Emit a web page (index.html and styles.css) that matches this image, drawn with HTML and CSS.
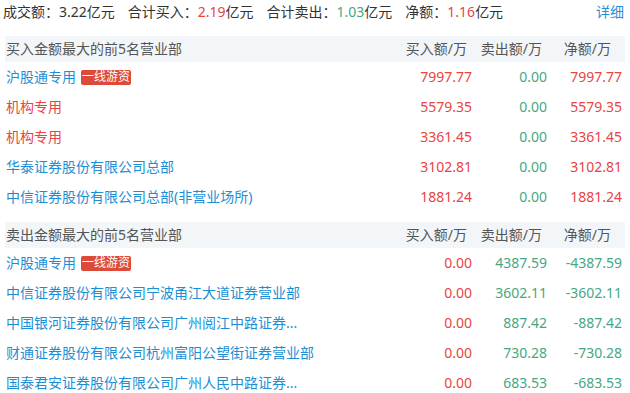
FILE: index.html
```html
<!DOCTYPE html>
<html lang="zh-CN">
<head>
<meta charset="utf-8">
<link rel="stylesheet" href="styles.css">
</head>
<body>
<div class="summary">
  <span class="item">成交额：<span class="num">3.22</span>亿元</span>
  <span class="item">合计买入：<span class="num up">2.19</span>亿元</span>
  <span class="item">合计卖出：<span class="num down">1.03</span>亿元</span>
  <span class="item">净额：<span class="num up">1.16</span>亿元</span>
  <a class="detail">详细</a>
</div>

<div class="table">
  <div class="row head">
    <div class="name">买入金额最大的前5名营业部</div>
    <div class="c1">买入额/万</div>
    <div class="c2">卖出额/万</div>
    <div class="c3">净额/万</div>
  </div>
  <div class="row">
    <div class="name link">沪股通专用<span class="tag">一线游资</span></div>
    <div class="c1 up">7997.77</div><div class="c2 down">0.00</div><div class="c3 up">7997.77</div>
  </div>
  <div class="row">
    <div class="name inst">机构专用</div>
    <div class="c1 up">5579.35</div><div class="c2 down">0.00</div><div class="c3 up">5579.35</div>
  </div>
  <div class="row">
    <div class="name inst">机构专用</div>
    <div class="c1 up">3361.45</div><div class="c2 down">0.00</div><div class="c3 up">3361.45</div>
  </div>
  <div class="row">
    <div class="name link">华泰证券股份有限公司总部</div>
    <div class="c1 up">3102.81</div><div class="c2 down">0.00</div><div class="c3 up">3102.81</div>
  </div>
  <div class="row">
    <div class="name link">中信证券股份有限公司总部(非营业场所)</div>
    <div class="c1 up">1881.24</div><div class="c2 down">0.00</div><div class="c3 up">1881.24</div>
  </div>
</div>

<div class="table second">
  <div class="row head">
    <div class="name">卖出金额最大的前5名营业部</div>
    <div class="c1">买入额/万</div>
    <div class="c2">卖出额/万</div>
    <div class="c3">净额/万</div>
  </div>
  <div class="row">
    <div class="name link">沪股通专用<span class="tag">一线游资</span></div>
    <div class="c1 up">0.00</div><div class="c2 down">4387.59</div><div class="c3 down">-4387.59</div>
  </div>
  <div class="row">
    <div class="name link">中信证券股份有限公司宁波甬江大道证券营业部</div>
    <div class="c1 up">0.00</div><div class="c2 down">3602.11</div><div class="c3 down">-3602.11</div>
  </div>
  <div class="row">
    <div class="name link">中国银河证券股份有限公司广州阅江中路证券...</div>
    <div class="c1 up">0.00</div><div class="c2 down">887.42</div><div class="c3 down">-887.42</div>
  </div>
  <div class="row">
    <div class="name link">财通证券股份有限公司杭州富阳公望街证券营业部</div>
    <div class="c1 up">0.00</div><div class="c2 down">730.28</div><div class="c3 down">-730.28</div>
  </div>
  <div class="row">
    <div class="name link">国泰君安证券股份有限公司广州人民中路证券...</div>
    <div class="c1 up">0.00</div><div class="c2 down">683.53</div><div class="c3 down">-683.53</div>
  </div>
</div>
</body>
</html>
```

FILE: styles.css
```css
* { box-sizing: border-box; }
html, body {
  margin: 0;
  padding: 0;
  background: #ffffff;
  font-family: "Noto Sans", "Noto Sans CJK SC", sans-serif;
  font-size: 14px;
  color: #333333;
  overflow: hidden;
}
.summary {
  display: flex;
  align-items: center;
  height: 24px;
  padding: 0 6px 0 3px;
  line-height: 24px;
  margin-bottom: 12px;
}
.summary .item { margin-right: 13px; white-space: nowrap; }
.summary .detail {
  margin-left: auto;
  color: #2b8fd6;
  cursor: pointer;
}
.up { color: #e8453f; }
.down { color: #46a883; }
.table {
  margin: 0 5px;
}
.table.second { margin-top: 10px; }
.row {
  display: grid;
  grid-template-columns: 1fr 75px 75px 78px;
  height: 30px;
  align-items: center;
  line-height: 20px;
}
.row > div { text-align: right; white-space: nowrap; }
.row > .name {
  text-align: left;
  padding-left: 1px;
  display: flex;
  align-items: center;
  overflow: hidden;
}
.row > .c3 { padding-right: 3px; }
.row.head {
  height: 26px;
  background: #f3f6f9;
  color: #555555;
}
.row.head > .c1, .row.head > .c2 { padding-right: 5px; }
.row.head > .c3 { padding-right: 14px; }
.link { color: #1c8fd4; }
.inst { color: #e8453f; }
.tag {
  display: inline-block;
  margin-left: 5px;
  background: #dd4a39;
  color: #ffffff;
  font-size: 12px;
  line-height: 14px;
  height: 15px;
  padding: 0 1px;
  border-radius: 2px;
}
```
